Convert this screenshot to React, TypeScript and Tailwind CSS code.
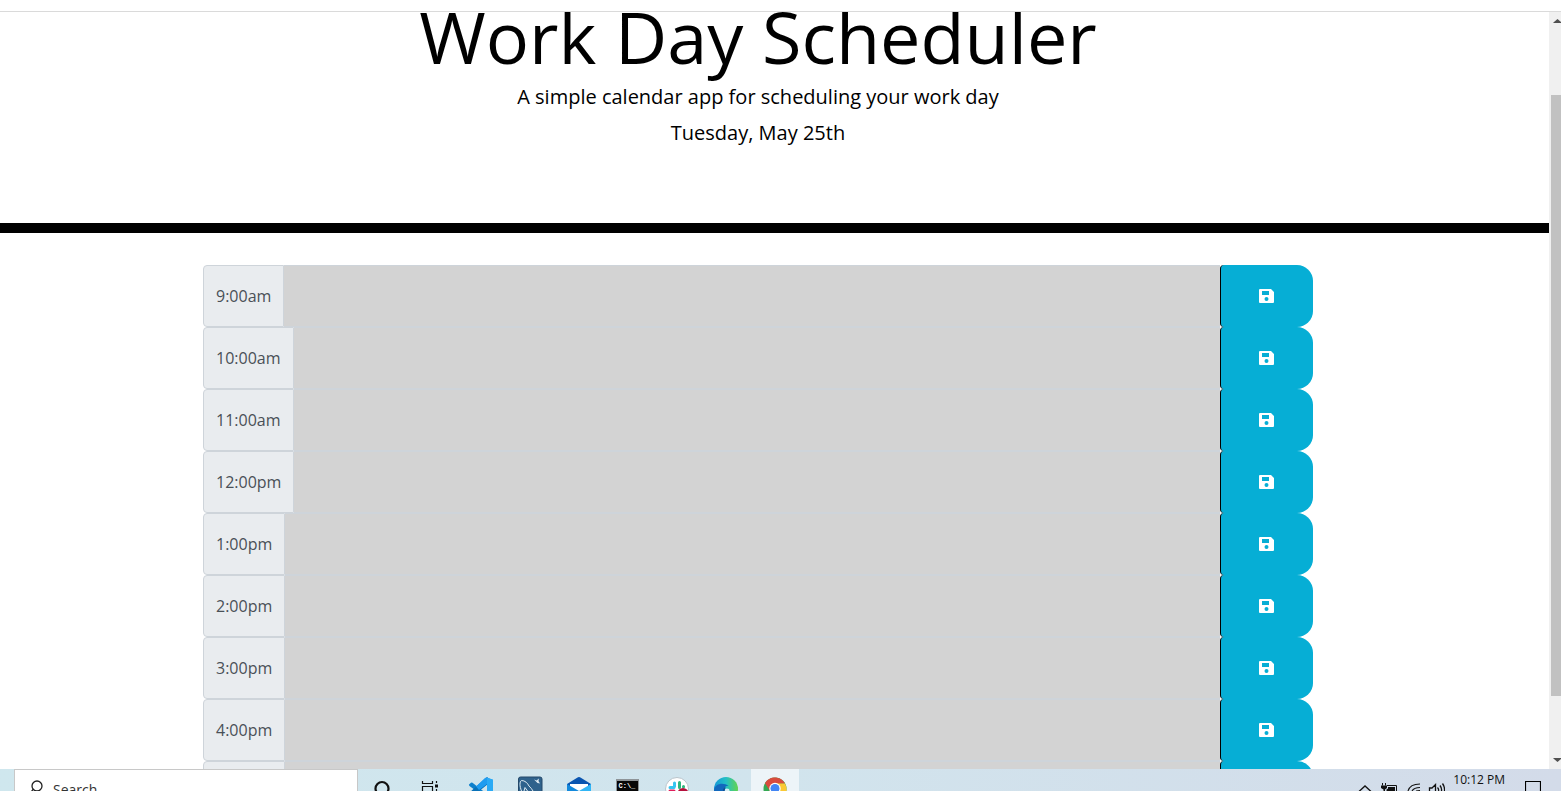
import type { ReactNode } from "react";

const hours = [
  "9:00am",
  "10:00am",
  "11:00am",
  "12:00pm",
  "1:00pm",
  "2:00pm",
  "3:00pm",
  "4:00pm",
  "5:00pm",
];

function SaveIcon() {
  return (
    <svg width="15" height="14" viewBox="0 0 15 14" aria-hidden="true">
      <path
        fill="#fff"
        fillRule="evenodd"
        d="M1 0H12L15 3V13a1 1 0 0 1-1 1H1a1 1 0 0 1-1-1V1a1 1 0 0 1 1-1ZM3 2V6H10V2ZM7.500 8a2 2 0 1 0 0 4a2 2 0 0 0 0-4Z"
      />
    </svg>
  );
}

function TimeBlock({ hour }: { hour: string }) {
  const id = `plan-${hour.replace(":", "")}`;
  return (
    <div className="flex h-[62px]">
      <label
        htmlFor={id}
        className="flex items-center rounded-l border border-[#ced4da] bg-[#e9ecef] px-3 text-base text-[#495057]"
      >
        {hour}
      </label>
      <textarea
        id={id}
        className="min-w-0 flex-1 resize-none border-y border-[#ced4da] bg-[#d3d3d3] px-3 py-1.5 text-base outline-none"
      />
      <button
        type="button"
        aria-label="Save"
        className="flex w-[93px] items-center justify-center rounded-l rounded-r-2xl border-l border-black bg-[#06aed5] pr-0.5"
      >
        <SaveIcon />
      </button>
    </div>
  );
}

function Scrollbar() {
  return (
    <div className="flex w-3 shrink-0 flex-col items-end overflow-hidden bg-[#f0f0f0]" aria-hidden="true">
      <svg className="shrink-0" width="8" height="17" viewBox="0 0 8 17">
        <path d="M0 11H8V10L4.500 7L1 10Z" fill="#505050" />
      </svg>
      <div className="grow-[66] basis-0" />
      <div className="w-2.5 grow-[601] basis-0 bg-[#c1c1c1]" />
      <div className="grow-[56] basis-0" />
      <svg className="shrink-0" width="8" height="17" viewBox="0 0 8 17">
        <path d="M0 6H8V7L4.500 10L1 7Z" fill="#505050" />
      </svg>
    </div>
  );
}

function Glyph({ children }: { children: ReactNode }) {
  return (
    <svg width="28" height="22" viewBox="0 0 28 22" aria-hidden="true">
      {children}
    </svg>
  );
}

const apps: { name: string; active?: boolean; art: ReactNode }[] = [
  {
    name: "Cortana",
    art: <circle cx="13" cy="19.500" r="6.500" fill="none" stroke="#111" strokeWidth="2.200" />,
  },
  {
    name: "Task View",
    art: (
      <g fill="none" stroke="#111" strokeWidth="1.200">
        <path d="M4.500 12V14.500H14.500V12M4.500 22V17.500H14.500V22M18.500 12V14M18.500 20V22" />
        <path d="M17 15.500H20V18.500H17Z" fill="#111" stroke="none" />
      </g>
    ),
  },
  {
    name: "Visual Studio Code",
    art: (
      <>
        <path d="M2 15.500L4 13.700Q4.700 13.200 5.500 13.800L20 25V30L2.500 17Q1.800 16.300 2 15.500Z" fill="#0e80cc" />
        <path d="M2 24L18.500 9.200Q19.500 8 21 8.500V15L6 27Z" fill="#0871b8" />
        <path d="M19.500 8.400L26 10.800V22H20V15L12 21L9 17.500L18 9Z" fill="#1f9cf0" />
        <path d="M20 8.500L26 10.800V22H20Z" fill="#2aaaf5" />
      </>
    ),
  },
  {
    name: "MySQL Workbench",
    art: (
      <>
        <rect x="2.500" y="8" width="23.500" height="22" rx="2" fill="#2f628c" stroke="#24496a" />
        <path
          d="M5.500 22C3.500 17 3.500 12.500 5.500 11.500C9 11.500 11.500 14 13 17C14.500 18.500 16 20 17 22M8 22L9 18.500L11.500 22"
          fill="none"
          stroke="#dce9f1"
          strokeWidth="1"
        />
        <path d="M18 10.500L20.500 11.500L23 9.500L22.500 12L24 14.500L21.500 14Z" fill="#dce9f1" />
      </>
    ),
  },
  {
    name: "Mail",
    art: (
      <>
        <path d="M2 15L13 8.200Q14 7.700 15 8.200L26 15V18H2Z" fill="#0a55b0" />
        <path d="M5 15H23V22H5Z" fill="#fff" />
        <path d="M2 15L14 22H2Z" fill="#1389dc" />
        <path d="M26 15L14 22H26Z" fill="#31b5f5" />
      </>
    ),
  },
  {
    name: "Command Prompt",
    art: (
      <>
        <rect x="2" y="10" width="23" height="14" fill="#8e9498" />
        <rect x="3" y="12" width="21" height="10" fill="#070707" />
        <text x="4.500" y="19" fontSize="7" fontWeight="700" fill="#fff" fontFamily="Liberation Mono, monospace">
          C:\_
        </text>
      </>
    ),
  },
  {
    name: "Slack",
    art: (
      <>
        <circle cx="14" cy="20" r="11.500" fill="#fff" stroke="#b9c4cb" />
        <g strokeWidth="3" strokeLinecap="round">
          <path d="M11.500 14V17.500M7 18.500H11" stroke="#36c5f0" />
          <path d="M16.500 13.500V18.500M20.500 17.500V18" stroke="#2eb67d" />
          <path d="M7 22H11" stroke="#e01e5a" />
        </g>
        <circle cx="20" cy="24.500" r="5.500" fill="#b5103c" />
      </>
    ),
  },
  {
    name: "Microsoft Edge",
    art: (
      <>
        <defs>
          <linearGradient id="edge-wave" x1="0" x2="1">
            <stop offset="0" stopColor="#1598d8" />
            <stop offset="0.500" stopColor="#23bfc6" />
            <stop offset="1" stopColor="#63d34e" />
          </linearGradient>
        </defs>
        <circle cx="14" cy="20" r="12" fill="url(#edge-wave)" />
        <path d="M2 21C3 14 12 13 16.500 17C12 16.500 10.500 20 11 23H2Z" fill="#1268bd" />
        <path d="M12.500 23C12 20 14 18.500 17 20L18 23Z" fill="#d5eef5" />
        <path d="M11 23Q10 19 13.500 17.500L12.500 23Z" fill="#124e99" />
      </>
    ),
  },
  {
    name: "Google Chrome",
    active: true,
    art: (
      <>
        <circle cx="14" cy="20" r="11.500" fill="#34a853" />
        <path d="M4 14.300C8 6.500 20 6.500 24 14.500L14 15L9 22Z" fill="#d94b3d" />
        <path d="M14 14.500H24Q26 18 25.500 23H18Z" fill="#fbc934" />
        <circle cx="14" cy="19.500" r="5.700" fill="#fff" />
        <circle cx="14" cy="19.500" r="4.500" fill="#4285f4" />
      </>
    ),
  },
];

function Taskbar() {
  return (
    <footer className="flex h-[22px] shrink-0 overflow-hidden bg-linear-to-r from-[#cfe7ee] via-[#d1e4ed] to-[#d3dbe9]">
      <label className="ml-3.5 flex w-[344px] shrink-0 items-start border border-b-0 border-[#c8c8c8] bg-white pl-4">
        <svg className="shrink-0" width="14" height="21" viewBox="0 0 14 21" aria-hidden="true">
          <circle cx="6" cy="16" r="5" fill="none" stroke="#222" strokeWidth="1.300" />
          <path d="M2.500 19L0 22" stroke="#222" strokeWidth="1.300" />
        </svg>
        <input
          type="search"
          placeholder="Search"
          aria-label="Search"
          className="mt-2.5 ml-2 h-5 min-w-0 flex-1 bg-transparent text-sm leading-5 outline-none placeholder:text-[#333]"
        />
      </label>
      <nav className="ml-px flex gap-px">
        {apps.map((app) => (
          <button
            key={app.name}
            type="button"
            aria-label={app.name}
            className={
              app.active
                ? "flex w-12 items-start justify-center bg-[#edf4f8]"
                : "flex w-12 items-start justify-center"
            }
          >
            <Glyph>{app.art}</Glyph>
          </button>
        ))}
      </nav>
      <div className="ml-auto flex items-start gap-2 pr-5">
        <svg width="88" height="22" viewBox="0 0 88 22" fill="none" stroke="#111" strokeWidth="1.300" aria-hidden="true">
          <path d="M2 22.500L8 17L14 22.500" />
          <path d="M25.500 14V16.500M28.500 14V16.500" strokeWidth="1" />
          <path d="M24 16.500H30V19L28 20.500V22H26.500V20.500L24 19Z" fill="#111" stroke="none" />
          <path d="M30 16.500H39.500V22" strokeWidth="1" />
          <path d="M31 18H38V22H29.500V20.500L31 19.500Z" fill="#111" stroke="none" />
          <path d="M51 22Q53 15 63 15M55 22Q57 18.500 63 18.500M59 22L63 21.500" strokeWidth="1.100" />
          <path d="M72.500 22V19H75L78.500 15.500V22M80.500 18.500Q82 20 81.500 22M83 16.500Q85 19 84.500 22M85.500 14.500Q88 18 87.500 22" />
        </svg>
        <time className="mt-0.5 text-xs leading-[18px] text-[#111]">10:12 PM</time>
        <svg className="ml-3" width="16" height="22" viewBox="0 0 16 22" aria-hidden="true">
          <path d="M0.500 22V12.500H15.500V22" fill="none" stroke="#000" strokeWidth="1.200" />
        </svg>
      </div>
    </footer>
  );
}

export default function App() {
  return (
    <div className="flex h-screen flex-col overflow-hidden bg-white font-['Open_Sans',sans-serif] text-black">
      <div className="h-3 shrink-0 border-b border-[#dadada]" />
      <div className="flex min-h-0 flex-1">
        <div className="min-w-0 flex-1 overflow-hidden">
          <header className="-mt-[19px] h-60 border-b-10 border-black pr-[33px] text-center">
            <h1 className="text-7xl leading-[86px] font-normal">Work Day Scheduler</h1>
            <p className="text-xl leading-9">A simple calendar app for scheduling your work day</p>
            <p className="text-xl leading-9">Tuesday, May 25th</p>
          </header>
          <main className="pt-8 pr-[33px]">
            <div className="mx-auto max-w-[1110px]">
              {hours.map((hour) => (
                <TimeBlock key={hour} hour={hour} />
              ))}
            </div>
          </main>
        </div>
        <Scrollbar />
      </div>
      <Taskbar />
    </div>
  );
}
